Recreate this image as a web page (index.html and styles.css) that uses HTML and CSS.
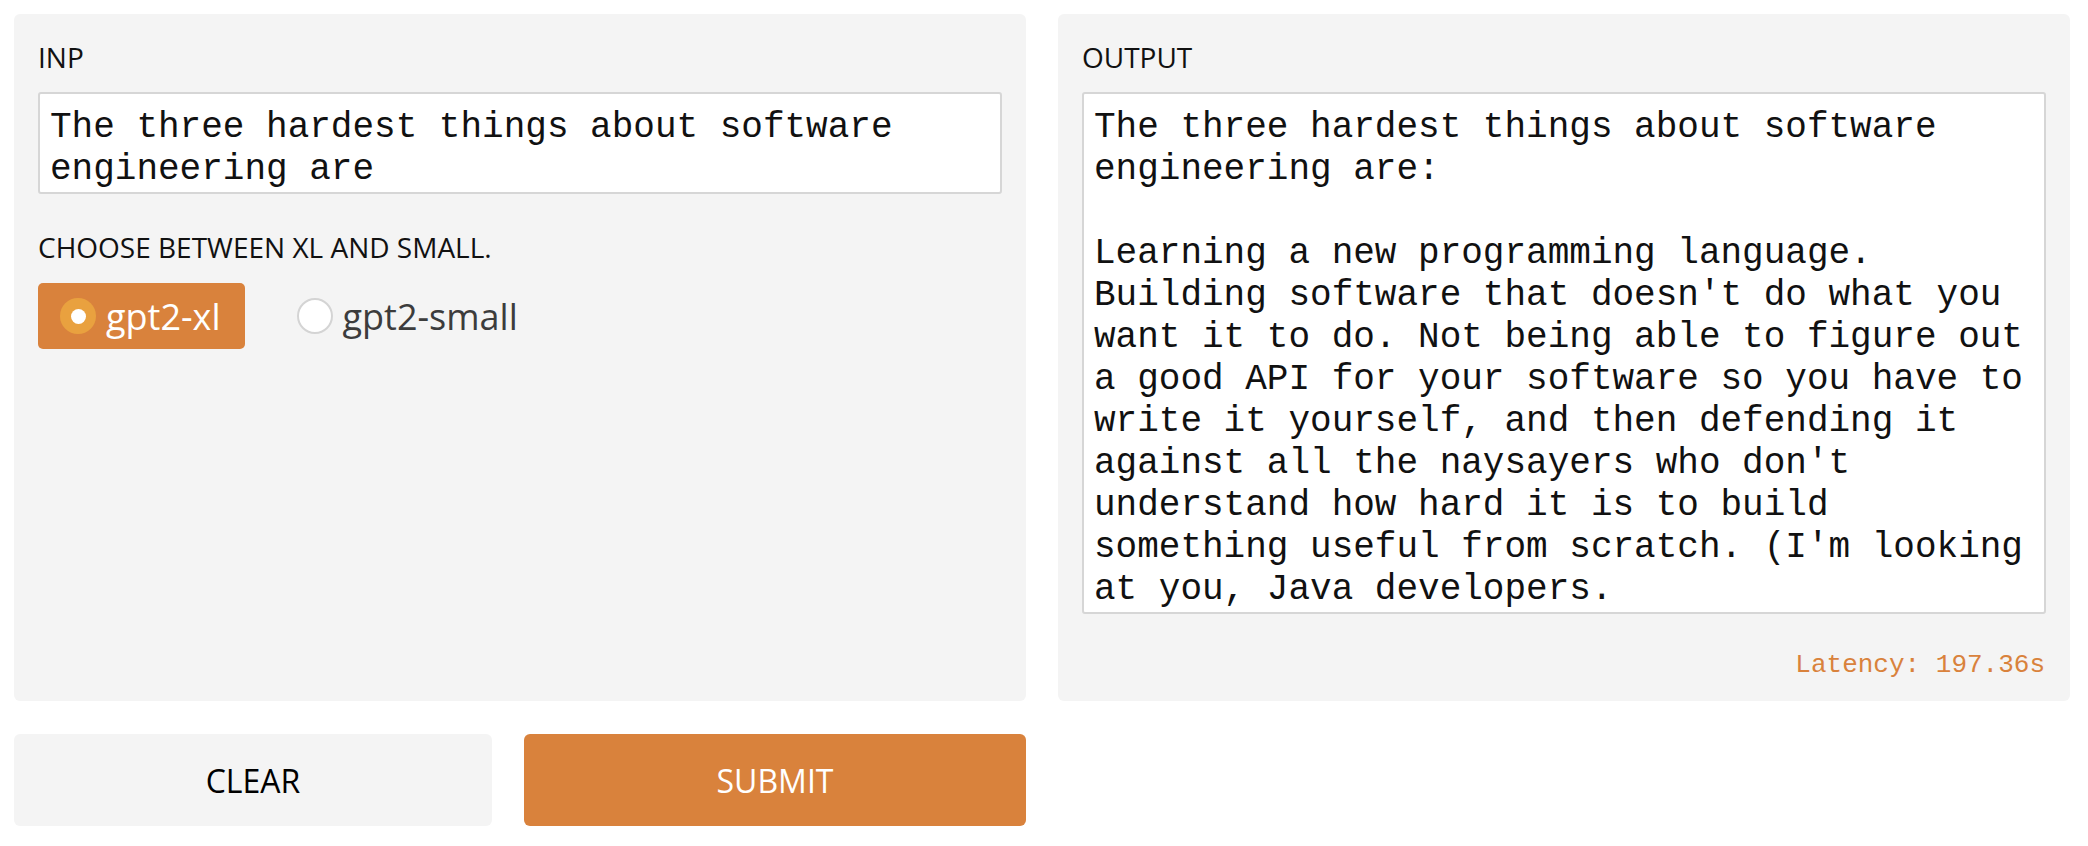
FILE: index.html
```html
<!DOCTYPE html>
<html>
<head>
<meta charset="utf-8">
<link rel="stylesheet" href="styles.css">
</head>
<body>
<div class="page">
  <div class="panels">
    <div class="panel">
      <div class="label">INP</div>
      <div class="textbox">The three hardest things about software
engineering are</div>
      <div class="label choose">CHOOSE BETWEEN XL AND SMALL.</div>
      <div class="radios">
        <div class="radio selected"><span class="dot"></span><span class="rtext">gpt2-xl</span></div>
        <div class="radio"><span class="dot"></span><span class="rtext">gpt2-small</span></div>
      </div>
    </div>
    <div class="panel output-panel">
      <div class="label">OUTPUT</div>
      <div class="textbox output">The three hardest things about software
engineering are:

Learning a new programming language.
Building software that doesn't do what you
want it to do. Not being able to figure out
a good API for your software so you have to
write it yourself, and then defending it
against all the naysayers who don't
understand how hard it is to build
something useful from scratch. (I'm looking
at you, Java developers.
</div>
      <div class="latency">Latency: 197.36s</div>
    </div>
  </div>
  <div class="buttons">
    <div class="btn clear">CLEAR</div>
    <div class="btn submit">SUBMIT</div>
  </div>
</div>
</body>
</html>
```

FILE: styles.css
```css
html, body {
  margin: 0;
  padding: 0;
  background: #ffffff;
}

.page {
  padding: 14px 18px 0 14px;
  font-family: "Open Sans", "Liberation Sans", sans-serif;
  color: #111;
}

.panels {
  display: grid;
  grid-template-columns: 1fr 1fr;
  gap: 32px;
}

.panel {
  background: #f4f4f4;
  border-radius: 6px;
  padding: 24px 24px 24px 24px;
  height: 687px;
  box-sizing: border-box;
  display: flex;
  flex-direction: column;
}

.label {
  font-size: 28px;
  line-height: 38px;
  text-transform: uppercase;
  color: #111;
}

.textbox {
  margin-top: 16px;
  background: #ffffff;
  border: 2px solid #d6d6d6;
  border-radius: 3px;
  padding: 13px 10px 1px 10px;
  font-family: "Liberation Mono", "Courier New", monospace;
  font-size: 36px;
  line-height: 42px;
  color: #111;
  white-space: pre;
}

.choose {
  margin-top: 34px;
}

.radios {
  margin-top: 17px;
  display: flex;
  gap: 30px;
}

.radio {
  height: 66px;
  display: flex;
  align-items: center;
  padding: 0 24px 0 22px;
  border-radius: 5px;
  font-size: 36px;
  color: #3c3c3c;
}

.radio.selected {
  background: #d9823c;
  color: #ffffff;
}

.dot {
  width: 36px;
  height: 36px;
  box-sizing: border-box;
  border-radius: 50%;
  background: #ffffff;
  border: 2px solid #d4d4d4;
  margin-right: 10px;
  flex: none;
  display: flex;
  align-items: center;
  justify-content: center;
}

.selected .dot {
  background: #e9a13f;
  border: none;
}

.selected .dot::after {
  content: "";
  width: 15px;
  height: 15px;
  border-radius: 50%;
  background: #ffffff;
}

.rtext {
  line-height: 49px;
}

.latency {
  margin-top: auto;
  margin-bottom: -3px;
  text-align: right;
  font-family: "Liberation Mono", "Courier New", monospace;
  font-size: 26px;
  color: #d9823c;
  padding-right: 1px;
}

.buttons {
  width: 1012px;
  margin-top: 33px;
  display: grid;
  grid-template-columns: 478fr 502fr;
  gap: 32px;
}

.btn {
  height: 92px;
  border-radius: 6px;
  display: flex;
  align-items: center;
  justify-content: center;
  font-size: 32px;
  text-transform: uppercase;
}

.clear {
  background: #f4f4f4;
  color: #000;
}

.submit {
  background: #d9823c;
  color: #ffffff;
}
```
